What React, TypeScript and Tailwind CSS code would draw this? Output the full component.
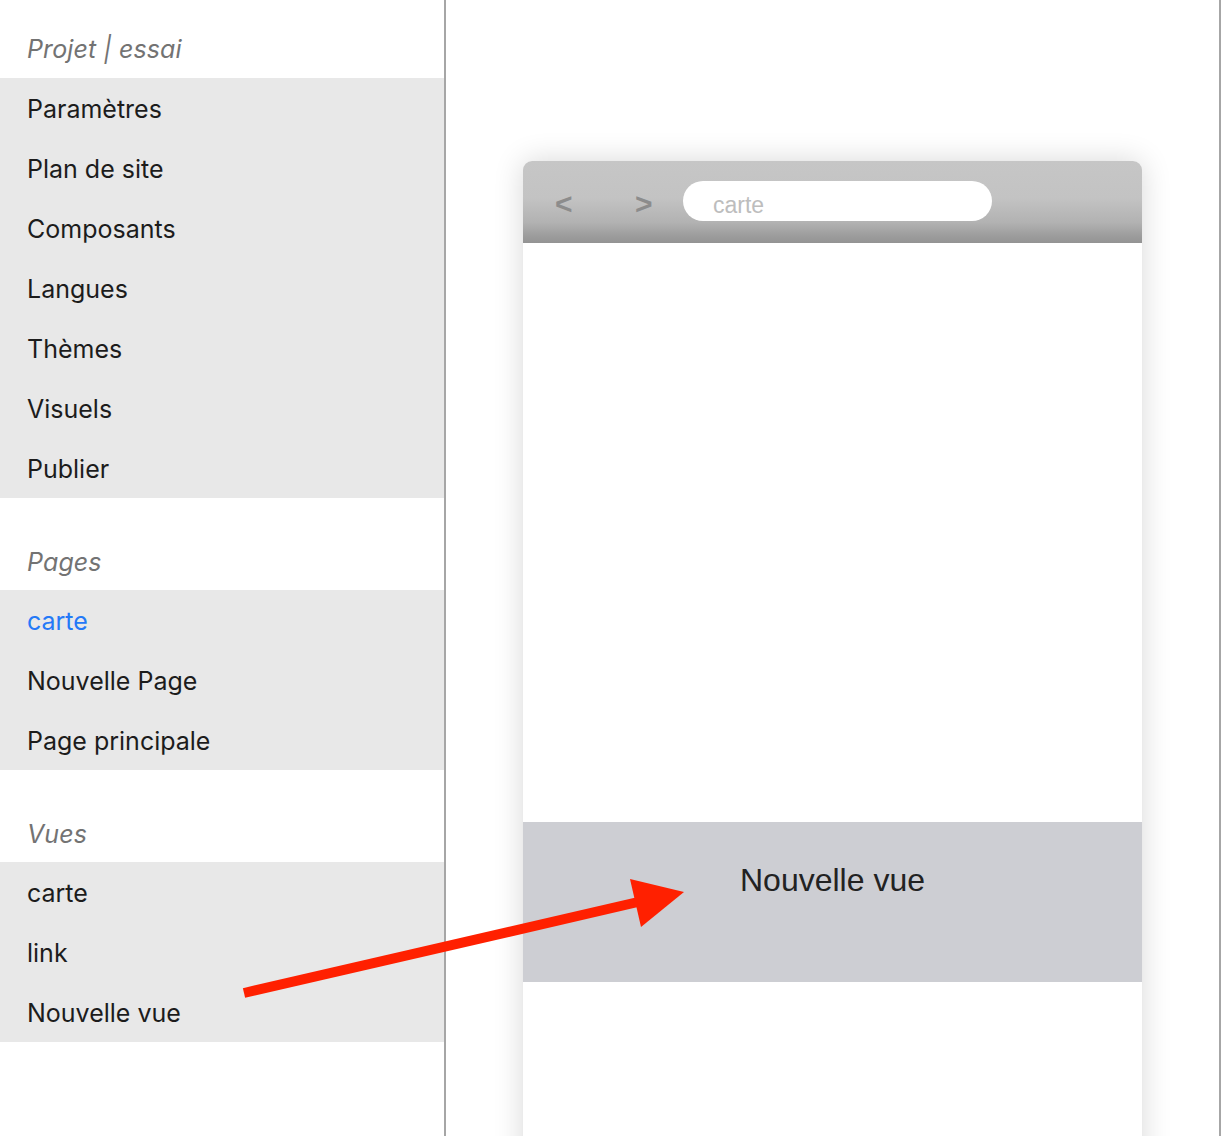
import React from "react";

const sans = { fontFamily: "Inter, 'Open Sans', sans-serif" };

function Header({ label, first }: { label: string; first?: boolean }) {
  return (
    <div
      className={
        first
          ? "flex h-[78px] items-center pl-[27px] pt-[20px]"
          : "flex h-[92px] items-center pl-[27px] pt-[36px]"
      }
    >
      <span className="text-[25px] italic leading-[30px] tracking-[0.1px] text-[#737373]">{label}</span>
    </div>
  );
}

function Items({ items, active }: { items: string[]; active?: string }) {
  return (
    <div className="bg-[#e8e8e8]">
      {items.map((it) => (
        <div key={it} className="flex h-[60px] items-center pl-[27px] pt-[2px]">
          <span
            className={
              it === active
                ? "text-[25px] font-[440] leading-[30px] text-[#2479f7]"
                : "text-[25px] font-[440] leading-[30px] text-[#1c1c1c]"
            }
          >
            {it}
          </span>
        </div>
      ))}
    </div>
  );
}

export default function App() {
  return (
    <div className="relative flex h-[1136px] w-[1224px] overflow-hidden bg-white" style={sans}>
      <aside className="w-[446px] shrink-0 border-r-2 border-[#a6a6a6]">
        <Header label="Projet | essai" first />
        <Items
          items={["Paramètres", "Plan de site", "Composants", "Langues", "Thèmes", "Visuels", "Publier"]}
        />
        <Header label="Pages" />
        <Items items={["carte", "Nouvelle Page", "Page principale"]} active="carte" />
        <Header label="Vues" />
        <Items items={["carte", "link", "Nouvelle vue"]} />
      </aside>

      <main className="w-[775px] shrink-0 border-r-2 border-[#a6a6a6] pt-[161px]">
        <div className="ml-[77px] h-[1100px] w-[619px] overflow-hidden rounded-t-[9px] bg-white shadow-[0_0_30px_rgba(0,0,0,0.16)]">
          <div
            className="relative flex h-[82px] items-center bg-[linear-gradient(to_bottom,#c6c6c6_0%,#c3c3c3_45%,#b2b2b2_75%,#9e9e9e_90%,#939393_100%)]"
            style={{ fontFamily: "'Liberation Sans', Arial, sans-serif" }}
          >
            <span className="absolute left-[32px] top-[25px] text-[30px] font-bold leading-[36px] text-[#8c8c8c]">&lt;</span>
            <span className="absolute left-[112px] top-[25px] text-[30px] font-bold leading-[36px] text-[#8c8c8c]">&gt;</span>
            <div className="ml-[160px] mt-[-2px] flex h-[40px] w-[309px] items-center rounded-full bg-white pl-[30px]">
              <span className="mt-[7px] text-[23px] leading-[28px] text-[#bdbdbd]">carte</span>
            </div>
          </div>
          <div className="h-[579px] bg-white" />
          <div
            className="h-[160px] bg-[#cdced3] pl-[217px] pt-[38px]"
            style={{ fontFamily: "'Liberation Sans', Arial, sans-serif" }}
          >
            <span className="text-[32px] leading-[40px] text-[#222222]">Nouvelle vue</span>
          </div>
          <div className="h-[300px] bg-white" />
        </div>
      </main>

      <svg
        className="pointer-events-none absolute left-0 top-0"
        width="1224"
        height="1136"
        viewBox="0 0 1224 1136"
      >
        <line x1="244" y1="993" x2="638" y2="902" stroke="#ff2000" strokeWidth="10" />
        <polygon points="684,892 630,879 641,927" fill="#ff2000" />
      </svg>
    </div>
  );
}
